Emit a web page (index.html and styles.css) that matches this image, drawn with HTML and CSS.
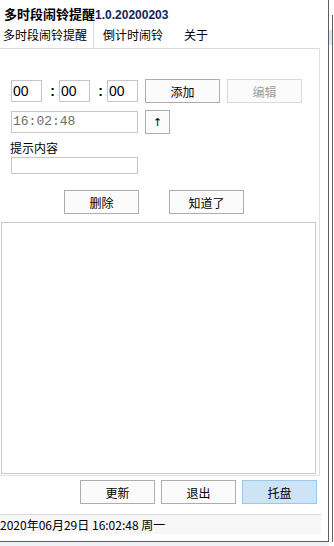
FILE: index.html
```html
<!DOCTYPE html>
<html lang="zh-CN">
<head>
    <meta charset="UTF-8">
    <meta name="viewport" content="width=device-width, initial-scale=1.0">
    <title>多时段闹铃提醒</title>
    <link rel="stylesheet" href="styles.css">
</head>
<body>
    <div class="screen">
        <div class="window">
            <div class="title">多时段闹铃提醒<span class="version">1.0.20200203</span></div>

            <div class="tabs">
                <div class="tab tab-active">多时段闹铃提醒</div>
                <div class="tab tab-second">倒计时闹铃</div>
                <div class="tab tab-third">关于</div>
            </div>

            <div class="panel">
                <div class="row time-row">
                    <div class="field time-field">00</div>
                    <span class="colon">:</span>
                    <div class="field time-field">00</div>
                    <span class="colon">:</span>
                    <div class="field time-field">00</div>
                    <button class="btn btn-add">添加</button>
                    <button class="btn btn-disabled">编辑</button>
                </div>

                <div class="row now-row">
                    <div class="field now-field">16:02:48</div>
                    <button class="btn btn-arrow">↑</button>
                </div>

                <div class="label">提示内容</div>
                <div class="field note-field"></div>

                <div class="row action-row">
                    <button class="btn">删除</button>
                    <button class="btn">知道了</button>
                </div>

                <div class="listbox"></div>
            </div>

            <div class="bottom-buttons">
                <button class="btn">更新</button>
                <button class="btn">退出</button>
                <button class="btn btn-focus">托盘</button>
            </div>

            <div class="status">2020年06月29日 16:02:48 周一</div>
        </div>
        <div class="edge">
            <div class="edge-thumb"></div>
        </div>
    </div>
    <div class="desk"></div>
</body>
</html>
```

FILE: styles.css
```css
body {
    margin: 0;
    background: #ffffff;
    font-family: "Noto Sans CJK SC", "Liberation Sans", sans-serif;
    font-size: 12px;
    color: #000;
}
.screen {
    display: flex;
    height: 542px;
}
.window {
    width: 328px;
    height: 541px;
    border-right: 1px solid #5f5f5f;
    border-bottom: 1px solid #5f5f5f;
    background: #fff;
    display: flex;
    flex-direction: column;
}
.edge {
    width: 3px;
    margin-top: 15px;
    border-right: 1px solid #5f5f5f;
}
.edge-thumb {
    height: 15px;
    margin-top: 15px;
    background: #dde8f6;
}
.desk {
    width: 329px;
    height: 4px;
    background: #eef1f8;
}

.title {
    height: 22px;
    padding: 6px 0 0 4px;
    box-sizing: border-box;
    line-height: 16px;
    font-size: 13px;
    font-weight: bold;
    white-space: nowrap;
}
.version {
    font-family: "Liberation Sans", sans-serif;
    font-size: 12px;
    color: #14245a;
}

.tabs {
    display: flex;
    height: 26px;
    line-height: 26px;
}
.tab {
    white-space: nowrap;
}
.tab-active {
    padding: 0 6px 0 3px;
    border-right: 1px solid #dadada;
}
.tab-second {
    padding: 0 10px 0 9px;
}
.tab-third {
    padding: 0 0 0 11px;
}

.panel {
    width: 320px;
    box-sizing: border-box;
    border-top: 1px solid #dcdcdc;
    border-right: 1px solid #e0e0e0;
    border-bottom: 1px solid #e0e0e0;
    padding: 30px 0 1px 0;
}
.row {
    display: flex;
    align-items: center;
    height: 24px;
    padding-left: 11px;
}
.field {
    box-sizing: border-box;
    border: 1px solid #c6c6c6;
    background: #fff;
}
.time-field {
    width: 31px;
    height: 22px;
    padding-left: 1px;
    font-family: "Liberation Sans", sans-serif;
    font-size: 14px;
    line-height: 20px;
}
.colon {
    width: 17px;
    box-sizing: border-box;
    padding-right: 4px;
    text-align: right;
    font-family: "Liberation Sans", sans-serif;
    font-size: 14px;
    font-weight: bold;
}
.btn {
    width: 75px;
    height: 24px;
    box-sizing: border-box;
    border: 1px solid #adadad;
    background: #fbfbfb;
    font-family: "Noto Sans CJK SC", sans-serif;
    font-size: 12px;
    color: #000;
    padding: 0;
}
.btn-add {
    margin-left: 7px;
}
.btn-disabled {
    margin-left: 7px;
    border-color: #d9d9d9;
    color: #a0a0a0;
}
.now-row {
    margin-top: 7px;
}
.now-field {
    width: 127px;
    height: 22px;
    padding-left: 1px;
    font-family: "Liberation Mono", monospace;
    font-size: 13px;
    line-height: 20px;
    color: #6d6d6d;
}
.btn-arrow {
    width: 25px;
    margin-left: 7px;
    font-family: "DejaVu Sans", sans-serif;
    font-size: 11px;
}
.label {
    margin-top: 6px;
    padding-left: 10px;
    line-height: 15px;
}
.note-field {
    width: 127px;
    height: 17px;
    margin: 2px 0 0 11px;
}
.action-row {
    margin-top: 16px;
    padding-left: 64px;
    gap: 30px;
}
.listbox {
    width: 315px;
    height: 252px;
    margin: 8px 0 0 1px;
    box-sizing: border-box;
    border: 1px solid #c9c9c9;
}

.bottom-buttons {
    display: flex;
    gap: 6px;
    margin-top: 4px;
    padding-left: 80px;
}
.btn-focus {
    background: #cde3f6;
    border-color: #9cc6eb;
}

.status {
    width: 321px;
    height: 19px;
    margin-top: 10px;
    border-top: 1px solid #dadada;
    background: #f7f7f7;
    line-height: 19px;
    white-space: nowrap;
}
```
